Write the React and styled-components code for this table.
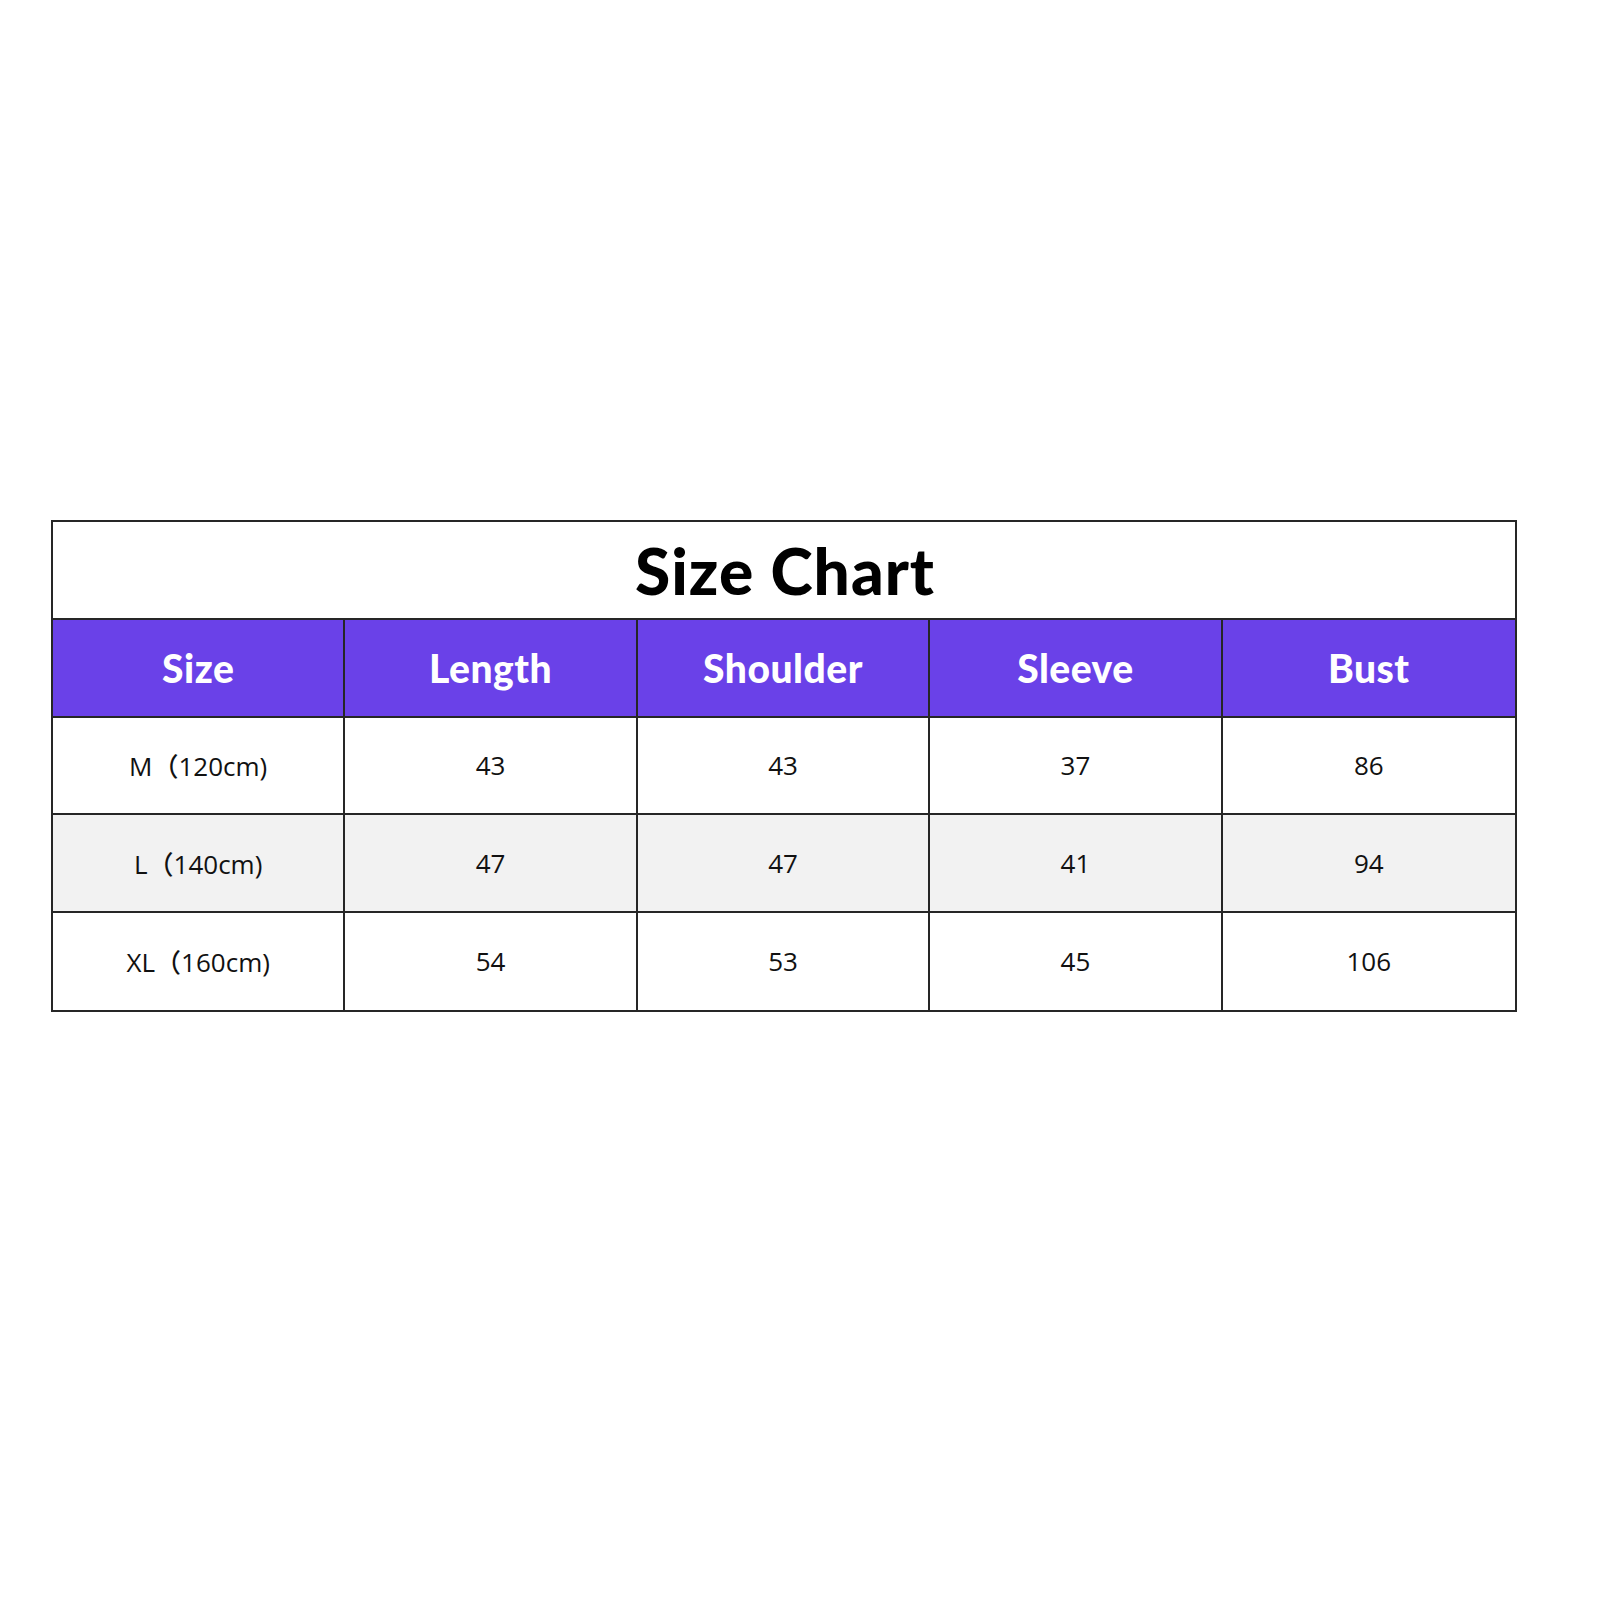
import { createGlobalStyle, styled } from "styled-components";

const GlobalStyle = createGlobalStyle`
  html, body {
    margin: 0;
    padding: 0;
    background: #fff;
  }
`;

const headers = ["Size", "Length", "Shoulder", "Sleeve", "Bust"];
const rows = [
  ["M（120cm)", "43", "43", "37", "86"],
  ["L（140cm)", "47", "47", "41", "94"],
  ["XL（160cm)", "54", "53", "45", "106"],
];

export default function App() {
  return (
    <>
      <GlobalStyle />
      <Page>
        <Chart>
          <Title>Size Chart</Title>
          <Grid>
            {headers.map((h) => (
              <HeadCell key={h}>{h}</HeadCell>
            ))}
            {rows.map((row, i) =>
              row.map((v, j) => (
                <Cell key={i + "-" + j} $shade={i % 2 === 1}>
                  {v}
                </Cell>
              ))
            )}
          </Grid>
        </Chart>
      </Page>
    </>
  );
}

const Page = styled.div`
  box-sizing: border-box;
  padding: 520px 0 0 51px;
  background: #fff;
`;

const Chart = styled.div`
  width: 1466px;
  border: 2px solid #262626;
  box-sizing: border-box;
  display: flex;
  flex-direction: column;
`;

const Title = styled.div`
  height: 96px;
  display: flex;
  align-items: center;
  justify-content: center;
  font-family: "Lato", "Inter", sans-serif;
  font-weight: 900;
  font-size: 64px;
  letter-spacing: 1px;
  color: #000;
  padding-left: 2px;
  border-bottom: 2px solid #262626;
`;

const Grid = styled.div`
  display: grid;
  grid-template-columns: repeat(5, 1fr);
  grid-auto-rows: 97.5px;
  & > *:nth-child(5n) {
    border-right: none;
  }
  & > *:nth-last-child(-n + 5) {
    border-bottom: none;
  }
`;

const HeadCell = styled.div`
  background: #6a41e8;
  color: #fff;
  display: flex;
  align-items: center;
  justify-content: center;
  font-family: "Lato", "Inter", sans-serif;
  font-weight: 900;
  font-size: 39px;
  letter-spacing: 0.5px;
  border-right: 2px solid #262626;
  border-bottom: 2px solid #262626;
`;

const Cell = styled.div`
  background: ${(p) => (p.$shade ? "#f2f2f2" : "#fff")};
  color: #111;
  display: flex;
  align-items: center;
  justify-content: center;
  font-family: "Open Sans", "Noto Sans CJK SC", sans-serif;
  font-size: 26px;
  font-weight: 500;
  border-right: 2px solid #262626;
  border-bottom: 2px solid #262626;
`;
